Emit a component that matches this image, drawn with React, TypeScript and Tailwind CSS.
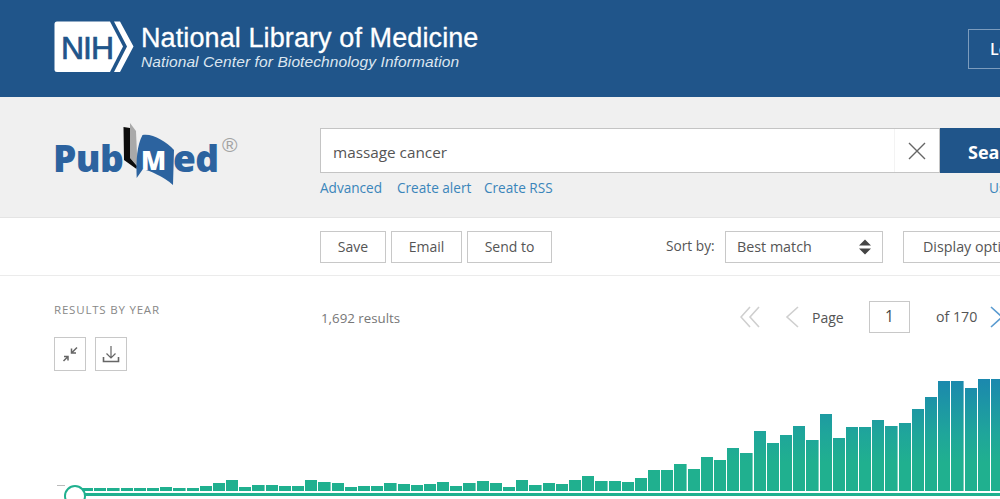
import React from 'react'

const bars = [
  3, 3, 3, 3, 3, 3, 4, 3, 3, 5, 8, 11, 4, 6, 6, 5, 5, 11, 9, 8, 4, 5, 5, 8, 7, 6, 7, 9, 5, 8, 10, 8, 4, 11, 6, 8, 7, 11, 15,
  10, 10, 9, 13, 21, 21, 27, 22, 34, 31, 43, 38, 60, 48, 56, 65, 51, 77, 53, 64, 64, 71, 65, 68, 82, 94, 110, 110, 103, 112,
  112,
]

const NihLogo: React.FC = () => (
  <svg width="80" height="52" viewBox="0 0 80 52" className="shrink-0">
    <path
      d="M3 0.5H56L69 25.5L56 51H3Q0.5 51 0.5 48.5V3Q0.5 0.5 3 0.5Z"
      fill="#fff"
    />
    <path d="M60 0.5H66L79.5 25.5L66 51H60L73 25.5Z" fill="#fff" />
    <text
      x="7"
      y="38"
      fontFamily="Liberation Sans, Arial, sans-serif"
      fontSize="32"
      fill="#20558a"
      stroke="#20558a"
      strokeWidth="0.7"
      letterSpacing="-1"
    >
      NIH
    </text>
  </svg>
)

const PubMedLogo: React.FC = () => (
  <svg width="190" height="72" viewBox="50 118 190 72" className="shrink-0">
    <text x="53" y="172" fontFamily="Open Sans, sans-serif" fontWeight="800" fontSize="37" letterSpacing="-0.6" fill="#2c639f">
      Pub
    </text>
    <path d="M130 123L136 131L137.5 166L130 158Z" fill="#a9a9a9" />
    <path d="M123.5 127L130 128V158L137 166L136.5 169L124 160Z" fill="#0c0c0c" />
    <path
      d="M136.7 178C136 160 137 145 142.5 135C152 133 166 141 174 150L173 185C163 176 150 171 143 169Z"
      fill="#2c639f"
    />
    <text x="141" y="169.5" fontFamily="Open Sans, sans-serif" fontWeight="800" fontSize="26" textLength="28" fill="#fff">
      M
    </text>
    <text x="173" y="172" fontFamily="Open Sans, sans-serif" fontWeight="800" fontSize="37" letterSpacing="-0.6" fill="#2c639f">
      ed
    </text>
    <text x="222" y="152" fontFamily="Liberation Sans, sans-serif" fontSize="21" fill="#a3a3a3">
      ®
    </text>
  </svg>
)

const ToolButton: React.FC<{ label: string; className: string }> = ({ label, className }) => (
  <button className={`h-[32px] border border-[#c8c8c8] bg-white text-[14px] text-[#555] ${className}`}>{label}</button>
)

export default function App() {
  return (
    <div className="flex h-[499px] w-[1000px] flex-col overflow-hidden bg-white font-['Open_Sans',sans-serif] text-[#555]">
      {/* Header */}
      <header className="flex h-[97px] shrink-0 items-center bg-[#20558a] pl-[54px]">
        <div className="mb-[3px]">
          <NihLogo />
        </div>
        <div className="ml-[7px] w-[827px] shrink-0 font-['Liberation_Sans',Arial,sans-serif] text-white">
          <div className="mt-[-4px] text-[27px] leading-[30px] tracking-[0.1px] [-webkit-text-stroke:0.3px_white]">
            National Library of Medicine
          </div>
          <div className="text-[15.5px] leading-[18px] tracking-[0.1px] text-[#dce6f0] italic">
            National Center for Biotechnology Information
          </div>
        </div>
        <button className="h-[40px] w-[80px] shrink-0 border border-[#7c9cbd] pl-[21px] text-left text-[16px] font-semibold text-white">
          Log in
        </button>
      </header>

      {/* Search */}
      <section className="flex h-[121px] shrink-0 border-b border-[#e4e4e4] bg-[#f0f0f0] pl-[54px]">
        <div className="w-[266px] shrink-0 pt-[21px]">
          <div className="ml-[-4px]">
            <PubMedLogo />
          </div>
        </div>
        <div className="shrink-0 pt-[31px]">
          <div className="flex h-[45px] w-[720px]">
            <div className="flex w-[620px] items-center border border-[#c4c4c4] bg-white pl-[12px] text-[15.3px] text-[#555]">
              <span className="flex-1 pt-[3px]">massage cancer</span>
              <span className="flex h-full w-[45px] items-center justify-center border-l border-[#f3f3f3]">
                <svg width="18" height="18" viewBox="0 0 18 18" fill="none" stroke="#666" strokeWidth="1.4">
                  <path d="M1 1L17 17M17 1L1 17" />
                </svg>
              </span>
            </div>
            <button className="w-[100px] bg-[#20558a] pt-[3px] pl-[28px] text-left text-[18px] font-bold text-white">
              Search
            </button>
          </div>
          <div className="mt-[5px] flex text-[13.6px] leading-[20px] text-[#3a85ba]">
            <a className="w-[77px]">Advanced</a>
            <a className="w-[87px]">Create alert</a>
            <a className="w-[505px]">Create RSS</a>
            <a className="whitespace-nowrap">User Guide</a>
          </div>
        </div>
      </section>

      {/* Toolbar */}
      <section className="flex h-[58px] shrink-0 items-center border-b border-[#ebebeb] pl-[320px]">
        <div className="flex w-[346px] shrink-0 gap-[5px]">
          <ToolButton label="Save" className="w-[66px]" />
          <ToolButton label="Email" className="w-[71px]" />
          <ToolButton label="Send to" className="w-[85px]" />
        </div>
        <span className="w-[59px] shrink-0 text-[13.7px]">Sort by:</span>
        <div className="flex h-[32px] w-[158px] shrink-0 items-center justify-between border border-[#c8c8c8] pr-[10px] pl-[11px] text-[14.3px]">
          Best match
          <svg width="14" height="16" viewBox="0 0 14 16" fill="#444">
            <path d="M7 0.5L13 6.5H1ZM7 15.5L1 9.5H13Z" />
          </svg>
        </div>
        <button className="ml-[20px] h-[32px] w-[140px] shrink-0 border border-[#c8c8c8] pl-[19px] text-left text-[14.3px] whitespace-nowrap">
          Display options
        </button>
      </section>

      {/* Results */}
      <section className="relative flex min-h-0 flex-1 flex-col">
        <div className="flex pl-[54px]">
          <div className="w-[266px] shrink-0 pt-[26px]">
            <div className="text-[11.5px] leading-[16px] tracking-[0.8px] text-[#888]">RESULTS BY YEAR</div>
            <div className="mt-[19px] flex gap-[9px]">
              <button className="flex h-[34px] w-[32px] items-center justify-center border border-[#c8c8c8]">
                <svg width="16" height="16" viewBox="0 0 16 16" fill="none" stroke="#666" strokeWidth="1.5">
                  <path d="M15 1.5L9.5 7M9.5 2.5V7H14M1.5 15L6 10.5M2 10.5H6V14.5" />
                </svg>
              </button>
              <button className="flex h-[34px] w-[32px] items-center justify-center border border-[#c8c8c8]">
                <svg width="18" height="18" viewBox="0 0 18 18" fill="none" stroke="#666" strokeWidth="1.2">
                  <path d="M9 1V13M4.5 8.5L9 13L13.5 8.5" />
                  <path d="M1.5 12V16.5H16.5V12" strokeWidth="1.6" />
                </svg>
              </button>
            </div>
          </div>
          <div className="flex h-[66px] w-[680px] shrink-0 items-start pt-[25px]">
            <span className="ml-px w-[419px] shrink-0 text-[13.3px] leading-[34px] text-[#777]">1,692 results</span>
            <div className="flex h-[32px] shrink-0 items-center">
              <svg width="20" height="22" viewBox="0 0 20 22" fill="none" stroke="#cfcfcf" strokeWidth="1.6">
                <path d="M10 1L1 11L10 21M19 1L10 11L19 21" />
              </svg>
              <svg className="ml-[25px]" width="14" height="22" viewBox="0 0 14 22" fill="none" stroke="#cfcfcf" strokeWidth="1.6">
                <path d="M13 1L2 11L13 21" />
              </svg>
              <span className="ml-[13px] w-[57px] shrink-0 text-[14px]">Page</span>
              <span className="flex h-[32px] w-[41px] items-center justify-center border border-[#c8c8c8] text-[15.5px] text-[#444]">
                1
              </span>
              <span className="ml-[26px] w-[54px] shrink-0 text-[14.2px]">of 170</span>
              <svg width="14" height="22" viewBox="0 0 14 22" fill="none" stroke="#5a9bd0" strokeWidth="1.6" className="shrink-0">
                <path d="M1 1L12 11L1 21" />
              </svg>
            </div>
          </div>
        </div>

        {/* Histogram */}
        <div className="mt-auto pl-[81px]">
          <div className="flex items-end gap-px">
            {bars.map((h, i) => (
              <div
                key={i}
                className="w-[12.2px] shrink-0 bg-[linear-gradient(to_bottom,#1b88ae,#1fa69a_50%,#20b08f_75%)] bg-[length:100%_112px] bg-bottom"
                style={{ height: h }}
              />
            ))}
          </div>
          <div className="mt-[2px] mb-[3px] h-[3px] bg-[#20b08f]" />
        </div>

        {/* Slider handle */}
        <div className="absolute top-[209px] left-[57px] h-px w-[8px] bg-[#bbb]" />
        <div className="absolute top-[209px] left-[64px] h-[22px] w-[22px] rounded-full border-2 border-[#20b08f] bg-white" />
      </section>
    </div>
  )
}
